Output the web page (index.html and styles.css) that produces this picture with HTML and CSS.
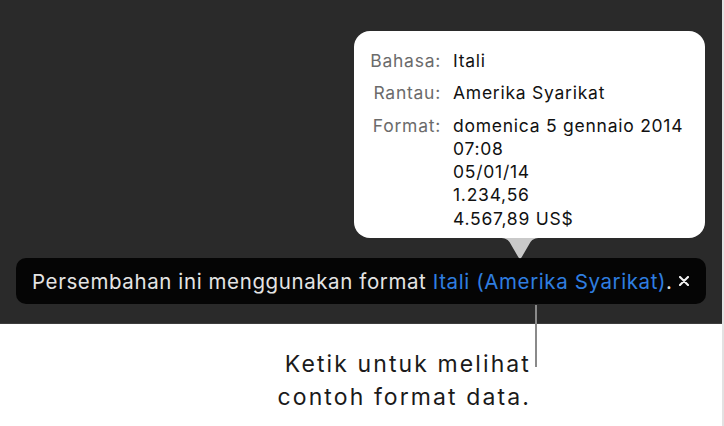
FILE: index.html
```html
<!DOCTYPE html>
<html>
<head>
<meta charset="utf-8">
<link rel="stylesheet" href="styles.css">
</head>
<body>
<div class="page">
  <div class="stage">
    <div class="popover">
      <div class="row">
        <div class="label">Bahasa:</div>
        <div class="value">Itali</div>
      </div>
      <div class="row">
        <div class="label">Rantau:</div>
        <div class="value">Amerika Syarikat</div>
      </div>
      <div class="row">
        <div class="label">Format:</div>
        <div class="value">domenica 5 gennaio 2014<br>07:08<br>05/01/14<br>1.234,56<br>4.567,89 US$</div>
      </div>
      <svg class="arrow" width="40" height="21" viewBox="0 0 40 21"><path d="M0 0 C5 0 7 1 9.5 4 L18.5 19.5 Q20 21 21.5 19.5 L30.5 4 C33 1 35 0 40 0 Z" fill="#c9c9c9"/></svg>
    </div>
    <div class="bar">
      <span class="msg">Persembahan ini menggunakan format <span class="link">Itali (Amerika Syarikat)</span>.</span>
      <svg class="close" width="10" height="10" viewBox="0 0 10 10"><path d="M1 1 L9 9 M9 1 L1 9" stroke="#f2f2f2" stroke-width="2.1" stroke-linecap="round"/></svg>
    </div>
  </div>
  <div class="callout">
    <div class="caption">Ketik untuk melihat<br>contoh format data.</div>
    <div class="leader"></div>
  </div>
</div>
</body>
</html>
```

FILE: styles.css
```css
html, body {
  margin: 0;
  padding: 0;
  background: #ffffff;
}
.page {
  width: 724px;
  height: 426px;
  position: relative;
  font-family: Inter, "Noto Sans", sans-serif;
  background: linear-gradient(to right, #ffffff 722px, #e2e2e2 722px);
}
.stage {
  width: 722px;
  height: 324px;
  background: #2a2a2a;
  border-bottom: 1px solid #3c3c3c;
  box-sizing: border-box;
  position: relative;
  padding-top: 258px;
  padding-left: 16px;
}
.bar {
  width: 690px;
  height: 46px;
  box-sizing: border-box;
  background: #050505;
  border-radius: 10px;
  display: flex;
  align-items: center;
  justify-content: space-between;
  padding: 0 17px 0 16px;
  font-size: 20.5px;
  color: #e4e4e4;
  letter-spacing: 0.6px;
}
.link {
  color: #2f7ee0;
}
.close {
  display: block;
  flex: none;
}
.popover {
  position: absolute;
  left: 354px;
  top: 31px;
  width: 351px;
  height: 207px;
  box-sizing: border-box;
  background: #ffffff;
  border-radius: 16px;
  padding: 18px 0 0 0;
  font-size: 17.5px;
  letter-spacing: 0.75px;
}
.row {
  display: flex;
  margin-bottom: 9px;
  line-height: 23.3px;
}
.label {
  width: 87px;
  text-align: right;
  color: #6b6b6b;
  flex: none;
}
.value {
  margin-left: 12px;
  color: #111111;
}
.arrow {
  position: absolute;
  left: 146px;
  top: 207px;
  display: block;
}
.callout {
  position: relative;
  height: 102px;
}
.caption {
  position: absolute;
  right: 193px;
  top: 24px;
  text-align: right;
  font-size: 23px;
  line-height: 33px;
  letter-spacing: 2.1px;
  color: #1a1a1a;
}
.leader {
  position: absolute;
  left: 535px;
  top: -19px;
  width: 2px;
  height: 62px;
  background: #8a8a8a;
}
```
